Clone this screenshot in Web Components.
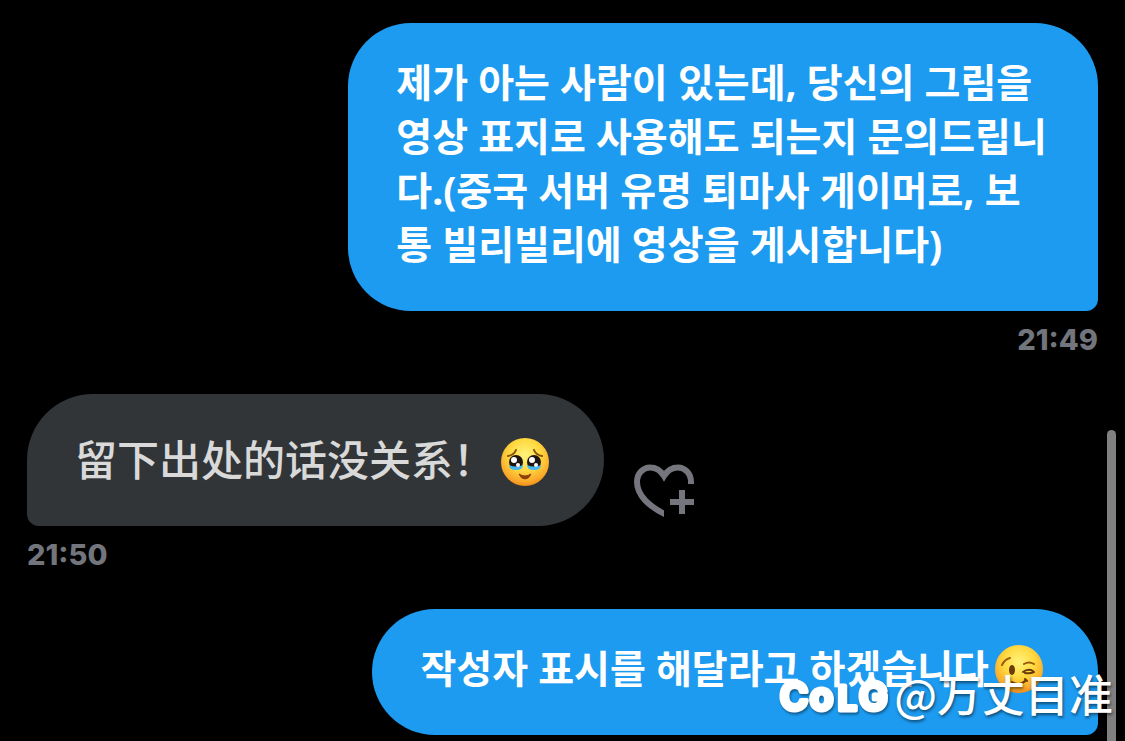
<!DOCTYPE html>
<html lang="ko">
<head>
<meta charset="utf-8">
<meta name="viewport" content="width=device-width, initial-scale=1">
<title>Messages</title>
<style>
	body {
		margin: 0;
		background: #000000;
		font-family: "Noto Sans CJK KR", sans-serif;
	}
</style>
</head>
<body>
<chat-thread>
	<chat-message side="sent" time="21:49">제가 아는 사람이 있는데, 당신의 그림을 영상 표지로 사용해도 되는지 문의드립니다.(중국 서버 유명 퇴마사 게이머로, 보통 빌리빌리에 영상을 게시합니다)</chat-message>
	<chat-message side="received" time="21:50" lang="zh-CN">留下出处的话没关系！<chat-emoji name="tears"></chat-emoji><reaction-button slot="action"></reaction-button></chat-message>
	<chat-message side="sent">작성자 표시를 해달라고 하겠습니다<chat-emoji name="wink"></chat-emoji></chat-message>
	<image-watermark slot="overlay" lang="zh-CN">@万丈目准</image-watermark>
</chat-thread>

<script>
class ChatThread extends HTMLElement {
	connectedCallback() {
		this.attachShadow({ mode: 'open' });

		this.shadowRoot.innerHTML = `
			<style>
				:host {
					display: block;
					position: relative;
					box-sizing: border-box;
					min-height: 100vh;
					padding: 23px 27px 0;
					overflow: hidden;
				}
				.messages {
					display: flex;
					flex-direction: column;
					gap: 36px;
				}
				.scrollbar {
					position: absolute;
					top: 430px;
					right: 9px;
					bottom: 0;
					width: 9px;
					border-radius: 5px 5px 0 0;
					background: #808080;
				}
			</style>
			<div class="messages"><slot></slot></div>
			<div class="scrollbar"></div>
			<slot name="overlay"></slot>
		`;
	}
}

class ChatMessage extends HTMLElement {
	connectedCallback() {
		this.attachShadow({ mode: 'open' });
		const time = this.getAttribute('time');

		this.shadowRoot.innerHTML = `
			<style>
				:host {
					display: flex;
					flex-direction: column;
					align-items: flex-start;
				}
				:host([side="sent"]) {
					align-items: flex-end;
				}
				.row {
					display: flex;
					align-items: flex-end;
					gap: 30px;
					max-width: 70%;
				}
				.bubble {
					padding: 34px 48px 38px;
					border-radius: 66px 66px 66px 12px;
					background: #313538;
					color: #d9d9d9;
					font: 500 42px/60px "Noto Sans CJK SC", sans-serif;
					word-break: break-all;
				}
				:host([side="sent"]) .bubble {
					padding: 32px 48px 40px;
					border-radius: 63px 63px 12px 63px;
					background: #1d9bf0;
					color: #ffffff;
					font: 700 39px/54px "Noto Sans", "Noto Sans CJK KR", sans-serif;
				}
				time {
					margin-top: 11px;
					font: 800 29px/36px Inter, sans-serif;
					color: #73757c;
				}
			</style>
			<div class="row">
				<div class="bubble"><slot></slot></div>
				<slot name="action"></slot>
			</div>
			${time ? `<time>${time}</time>` : ''}
		`;
	}
}

const FACES = {
	tears: `
		<path d="M7 18q6-1 8-6M41 18q-6-1-8-6" fill="none" stroke="#8a4f0a" stroke-width="2" stroke-linecap="round"/>
		<circle cx="15" cy="24" r="7" fill="#1d1512"/>
		<circle cx="33" cy="24" r="7" fill="#1d1512"/>
		<path d="M8 27q7 3 14 0q0 5-7 5t-7-5zM26 27q7 3 14 0q0 5-7 5t-7-5z" fill="#45b5ee"/>
		<circle cx="13" cy="22" r="3" fill="#fff"/>
		<circle cx="31" cy="22" r="3" fill="#fff"/>
		<circle cx="17" cy="27" r="2" fill="#fff"/>
		<circle cx="35" cy="27" r="2" fill="#fff"/>
		<path d="M18 36q6 4 12 0q-2 5-6 5t-6-5z" fill="#8a4208" stroke="#8a4208" stroke-linejoin="round"/>
	`,
	wink: `
		<path d="M7 20q3-6 8-7M29 19q5-3 10 0" fill="none" stroke="#9a5c0c" stroke-width="2" stroke-linecap="round"/>
		<ellipse cx="17" cy="25" rx="3" ry="5" fill="#6b3b08"/>
		<path d="M28 27q5-4 10-1M30 28q5 1 9-1" fill="none" stroke="#6b3b08" stroke-width="2" stroke-linecap="round"/>
		<path d="M17 37q8 5 14-2M30 34l2 2" fill="none" stroke="#6b3b08" stroke-width="2" stroke-linecap="round"/>
	`
};

class ChatEmoji extends HTMLElement {
	connectedCallback() {
		this.attachShadow({ mode: 'open' });

		this.shadowRoot.innerHTML = `
			<style>
				:host {
					display: inline-block;
					width: 48px;
					height: 48px;
					margin: -4px 7px -4px 6px;
					vertical-align: -6px;
				}
				svg {
					display: block;
				}
			</style>
			<svg width="48" height="48" viewBox="0 0 48 48" aria-hidden="true">
				<defs>
					<radialGradient id="skin" cx="50%" cy="35%" r="66%">
						<stop offset="0" stop-color="#fff27a"/>
						<stop offset="0.5" stop-color="#ffd83f"/>
						<stop offset="0.85" stop-color="#fba92a"/>
						<stop offset="1" stop-color="#ef8a1a"/>
					</radialGradient>
				</defs>
				<circle cx="24" cy="24" r="24" fill="url(#skin)"/>
				${FACES[this.getAttribute('name')]}
			</svg>
		`;
	}
}

class ReactionButton extends HTMLElement {
	connectedCallback() {
		this.attachShadow({ mode: 'open' });

		this.shadowRoot.innerHTML = `
			<style>
				:host {
					display: block;
					flex-shrink: 0;
				}
				button {
					display: block;
					padding: 0 0 8px;
					border: none;
					background: none;
					color: #75757d;
					cursor: pointer;
				}
				svg {
					display: block;
				}
			</style>
			<button type="button" aria-label="Add reaction">
				<svg width="60" height="54" viewBox="0 0 60 54" fill="none" stroke="currentColor" stroke-width="6" aria-hidden="true">
					<clipPath id="cut"><path d="M0 0h60v20H30v34H0z"/></clipPath>
					<path clip-path="url(#cut)" d="M57 20v-2C57 9 50.500 3.500 44 3.500c-6 0-11 3.500-14 8.500C27 7 22 3.500 16 3.500 9.500 3.500 3 9 3 18c0 13 12 25 30 33"/>
					<path d="M48 26v24M36 38h24"/>
				</svg>
			</button>
		`;
	}
}

class ImageWatermark extends HTMLElement {
	connectedCallback() {
		this.attachShadow({ mode: 'open' });

		this.shadowRoot.innerHTML = `
			<style>
				:host {
					position: absolute;
					right: 12px;
					bottom: 16px;
					display: flex;
					align-items: center;
					gap: 3px;
					color: #ffffff;
					font: 500 44px/64px "Noto Sans CJK SC", sans-serif;
					text-shadow: 1px 2px 3px rgba(0, 0, 0, 0.5);
					white-space: nowrap;
				}
				svg {
					display: block;
					overflow: visible;
					filter: drop-shadow(1px 2px 1px rgba(0, 0, 0, 0.4));
				}
				text {
					font: 600 38px Inter, sans-serif;
					fill: #ffffff;
					stroke: #ffffff;
					stroke-width: 5px;
					stroke-linejoin: round;
					text-shadow: none;
				}
				.small {
					font-size: 33px;
				}
			</style>
			<svg width="112" height="40" viewBox="0 0 112 40">
				<text y="37"><tspan x="1">C</tspan><tspan x="31">o</tspan><tspan class="small" x="59">L</tspan><tspan x="80">G</tspan></text>
			</svg>
			<span><slot></slot></span>
		`;
	}
}

customElements.define('chat-thread', ChatThread);
customElements.define('chat-message', ChatMessage);
customElements.define('chat-emoji', ChatEmoji);
customElements.define('reaction-button', ReactionButton);
customElements.define('image-watermark', ImageWatermark);
</script>
</body>
</html>
